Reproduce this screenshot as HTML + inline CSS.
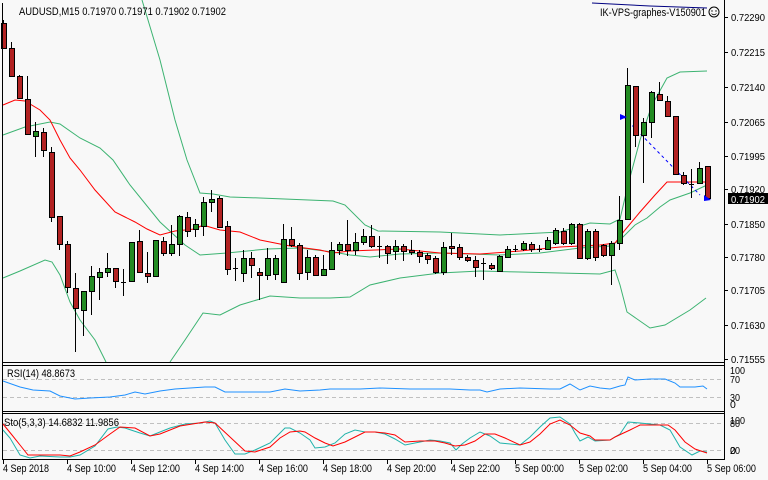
<!DOCTYPE html>
<html><head><meta charset="utf-8">
<style>
html,body{margin:0;padding:0;background:#f8f8f8;}
svg{display:block;font-family:"Liberation Sans",sans-serif;font-size:11px;}
</style></head>
<body>
<svg id="s" width="768" height="480" viewBox="0 0 768 480" xmlns="http://www.w3.org/2000/svg">
<rect width="768" height="480" fill="#f8f8f8"/>
<g id="bands" fill="none" stroke-width="1">
<polyline stroke="#3cb371" points="142,0 160,60 175,120 187,160 200,193 213,194 230,197 260,198 333,201 345,205 365,225 378,231 440,232 500,235 560,232 590,223 610,224 620,219 628,185 640,140 652,105 667,78 680,72 707,71"/>
<polyline stroke="#3cb371" points="3,135 25,127 50,122 60,124 80,138 100,148 113,160 130,185 160,222 185,245 200,255 227,253 267,249 300,248 333,252 350,255 370,257 400,254 440,253 470,254 500,255 540,253 580,248 610,246 620,240 635,225 647,218 660,207 670,200 690,193 707,185"/>
<polyline stroke="#3cb371" points="3,278 20,271 45,260 52,262 60,275 70,302 80,320 95,340 106,362"/>
<polyline stroke="#3cb371" points="170,362 185,340 203,313 220,315 240,305 250,302 270,296 300,298 330,298 350,297 370,285 400,278 440,273 480,271 520,272 560,273 600,274 615,270 620,285 627,312 650,328 665,325 690,310 706,298"/>
<polyline stroke="#ff0000" points="3,105 15,100 25,101 40,110 50,120 60,140 70,158 80,170 95,190 115,212 125,217 135,222 147,229 160,235 175,231 195,229 203,225 213,228 220,230 240,232 260,240 290,246 320,250 333,253 350,251 400,249 440,253 480,254 520,251 560,247 600,245 615,243 625,230 640,212 655,195 667,182 680,182 705,182"/>
<line x1="624" y1="117" x2="700" y2="195" stroke="#0000ff" stroke-dasharray="3,3"/>
<polyline stroke="#000080" points="592,3 650,6 707,8"/>
</g>
<g id="candles"></g>
<path d="M620,114 L627,117 L620,120 Z" fill="#0000ff"/>
<path d="M704,195 L711,200 L704,201 Z" fill="#0000ff"/>
<g fill="none" stroke="#000" stroke-width="1">
<line x1="2.5" y1="3" x2="2.5" y2="459"/>
<line x1="724.5" y1="0" x2="724.5" y2="460"/>
<line x1="2" y1="362.5" x2="725" y2="362.5"/>
<line x1="2" y1="365.5" x2="725" y2="365.5"/>
<line x1="2" y1="411.5" x2="725" y2="411.5"/>
<line x1="2" y1="413.5" x2="725" y2="413.5"/>
<line x1="2" y1="459.5" x2="725" y2="459.5"/>
</g>
<g stroke="#c0c0c0" stroke-dasharray="4,3">
<line x1="3" y1="379.5" x2="724" y2="379.5"/>
<line x1="3" y1="397.5" x2="724" y2="397.5"/>
<line x1="3" y1="423.5" x2="724" y2="423.5"/>
<line x1="3" y1="450.5" x2="724" y2="450.5"/>
</g>
<polyline fill="none" stroke="#1e90ff" points="3,381 20,387 33,390 50,391 60,396 75,399 90,398 110,397 125,395 135,392 145,394 160,391 175,389 190,388 205,387 215,387 225,392 245,392 270,392 285,389 300,391 320,390 330,389 360,389 380,388 410,389 450,389 470,390 480,390 487,392 500,389 520,388 550,389 560,389 570,384 580,390 590,386 600,388 610,389 620,386 625,385 628,377 635,380 650,379 665,379 675,383 680,387 695,387 703,386 707,389"/>
<polyline fill="none" stroke="#20b2aa" points="3,430 10,438 20,455 30,458 40,456 60,457 70,457 80,455 95,446 108,429 117,427 125,428 140,433 150,436 160,432 170,428 185,424 200,423 210,421 215,423 225,440 235,454 245,454 255,450 270,443 280,433 285,428 290,428 300,433 310,440 315,448 325,447 335,443 345,434 355,430 365,432 375,432 385,434 395,439 405,445 420,442 430,440 440,441 450,443 456,450 462,444 470,438 480,432 490,436 500,443 520,445 530,437 540,427 550,418 560,417 570,424 575,433 580,441 588,437 595,441 610,440 620,434 628,422 640,423 660,425 670,430 680,447 692,455 700,451 707,452"/>
<polyline fill="none" stroke="#ff0000" points="3,424 12,435 20,445 28,455 40,455 60,455 70,456 80,452 95,445 110,434 120,427 135,428 150,436 160,434 180,426 205,422 215,423 230,437 245,451 255,452 270,447 280,438 290,432 300,431 305,432 315,438 325,443 333,446 345,442 355,437 365,432 375,432 385,433 395,435 405,442 420,441 435,441 445,443 455,446 465,445 475,441 485,434 495,434 505,438 520,445 530,442 540,434 550,424 560,420 570,425 580,433 590,436 595,440 610,440 615,437 630,430 640,425 668,425 675,430 685,442 695,449 707,453"/>
<g fill="#000">
<text x="19" y="15" textLength="207" lengthAdjust="spacingAndGlyphs">AUDUSD,M15  0.71970 0.71971 0.71902 0.71902</text>
<text x="600" y="16" textLength="106" lengthAdjust="spacingAndGlyphs">IK-VPS-graphes-V150901</text>
<text x="7" y="377" textLength="68" lengthAdjust="spacingAndGlyphs">RSI(14) 48.8673</text>
<text x="4" y="426" textLength="115" lengthAdjust="spacingAndGlyphs">Sto(5,3,3) 14.6832 11.9856</text>
</g>
<circle cx="714" cy="12" r="5" fill="none" stroke="#000"/>
<circle cx="712" cy="11" r="0.7" fill="#000"/><circle cx="716" cy="11" r="0.7" fill="#000"/>
<path d="M711.5,13.5 Q714,16 716.5,13.5" fill="none" stroke="#000" stroke-width="0.8"/>
<g fill="#000" font-size="10.5">
<text x="731" y="21" textLength="34" lengthAdjust="spacingAndGlyphs">0.72290</text>
<text x="731" y="56" textLength="34" lengthAdjust="spacingAndGlyphs">0.72215</text>
<text x="731" y="91" textLength="34" lengthAdjust="spacingAndGlyphs">0.72140</text>
<text x="731" y="126" textLength="34" lengthAdjust="spacingAndGlyphs">0.72065</text>
<text x="731" y="160" textLength="34" lengthAdjust="spacingAndGlyphs">0.71995</text>
<text x="731" y="193" textLength="34" lengthAdjust="spacingAndGlyphs">0.71920</text>
<text x="731" y="228" textLength="34" lengthAdjust="spacingAndGlyphs">0.71850</text>
<text x="731" y="261" textLength="34" lengthAdjust="spacingAndGlyphs">0.71780</text>
<text x="731" y="294" textLength="34" lengthAdjust="spacingAndGlyphs">0.71705</text>
<text x="731" y="329" textLength="34" lengthAdjust="spacingAndGlyphs">0.71630</text>
<text x="731" y="363" textLength="34" lengthAdjust="spacingAndGlyphs">0.71555</text>
<text x="730" y="374" textLength="15" lengthAdjust="spacingAndGlyphs">100</text>
<text x="730" y="383" textLength="10" lengthAdjust="spacingAndGlyphs">70</text>
<text x="730" y="401" textLength="10" lengthAdjust="spacingAndGlyphs">30</text>
<text x="730" y="408">0</text>
<text x="730" y="424" textLength="15" lengthAdjust="spacingAndGlyphs">100</text>
<text x="730" y="427" textLength="10" lengthAdjust="spacingAndGlyphs">80</text>
<text x="730" y="454" textLength="10" lengthAdjust="spacingAndGlyphs">20</text>
<text x="730" y="454">0</text>
</g>
<g stroke="#000">
<line x1="724" y1="17.5" x2="728" y2="17.5"/><line x1="724" y1="52.5" x2="728" y2="52.5"/><line x1="724" y1="87.5" x2="728" y2="87.5"/><line x1="724" y1="122.5" x2="728" y2="122.5"/><line x1="724" y1="156.5" x2="728" y2="156.5"/><line x1="724" y1="189.5" x2="728" y2="189.5"/><line x1="724" y1="224.5" x2="728" y2="224.5"/><line x1="724" y1="257.5" x2="728" y2="257.5"/><line x1="724" y1="290.5" x2="728" y2="290.5"/><line x1="724" y1="325.5" x2="728" y2="325.5"/><line x1="724" y1="359.5" x2="728" y2="359.5"/>
</g>
<rect x="728" y="193" width="40" height="11" fill="#000"/>
<text x="731" y="203" fill="#fff" font-size="10.5" textLength="34" lengthAdjust="spacingAndGlyphs">0.71902</text>
<g stroke="#000">
<line x1="3.5" y1="459" x2="3.5" y2="464"/><line x1="67.5" y1="459" x2="67.5" y2="464"/><line x1="131.5" y1="459" x2="131.5" y2="464"/><line x1="195.5" y1="459" x2="195.5" y2="464"/><line x1="259.5" y1="459" x2="259.5" y2="464"/><line x1="323.5" y1="459" x2="323.5" y2="464"/><line x1="387.5" y1="459" x2="387.5" y2="464"/><line x1="451.5" y1="459" x2="451.5" y2="464"/><line x1="515.5" y1="459" x2="515.5" y2="464"/><line x1="579.5" y1="459" x2="579.5" y2="464"/><line x1="643.5" y1="459" x2="643.5" y2="464"/><line x1="707.5" y1="459" x2="707.5" y2="464"/>
</g>
<g fill="#000">
<text x="3" y="472" textLength="46" lengthAdjust="spacingAndGlyphs">4 Sep 2018</text>
<text x="67" y="472" textLength="49" lengthAdjust="spacingAndGlyphs">4 Sep 10:00</text>
<text x="131" y="472" textLength="49" lengthAdjust="spacingAndGlyphs">4 Sep 12:00</text>
<text x="195" y="472" textLength="49" lengthAdjust="spacingAndGlyphs">4 Sep 14:00</text>
<text x="259" y="472" textLength="49" lengthAdjust="spacingAndGlyphs">4 Sep 16:00</text>
<text x="323" y="472" textLength="49" lengthAdjust="spacingAndGlyphs">4 Sep 18:00</text>
<text x="387" y="472" textLength="49" lengthAdjust="spacingAndGlyphs">4 Sep 20:00</text>
<text x="451" y="472" textLength="49" lengthAdjust="spacingAndGlyphs">4 Sep 22:00</text>
<text x="515" y="472" textLength="49" lengthAdjust="spacingAndGlyphs">5 Sep 00:00</text>
<text x="579" y="472" textLength="49" lengthAdjust="spacingAndGlyphs">5 Sep 02:00</text>
<text x="643" y="472" textLength="49" lengthAdjust="spacingAndGlyphs">5 Sep 04:00</text>
<text x="707" y="472" textLength="49" lengthAdjust="spacingAndGlyphs">5 Sep 06:00</text>
</g>
</svg>
<script>
var d=[[3,23,48,20,48,'r'],[11,48,76,42,76,'r'],[19,76,98,75,98,'r'],[27,99,134,76,134,'r'],[35,131,136,122,157,'g'],[43,132,150,128,157,'r'],[51,152,217,147,222,'r'],[59,216,244,216,250,'r'],[67,244,287,241,293,'r'],[75,288,308,273,352,'r'],[83,291,310,291,336,'g'],[91,276,291,266,315,'g'],[99,272,277,268,300,'g'],[107,268,272,253,277,'g'],[115,268,281,268,288,'r'],[123,282,282,269,296,'d'],[131,242,281,242,281,'g'],[139,241,272,230,272,'r'],[147,273,276,252,283,'r'],[155,240,276,240,277,'g'],[163,241,253,237,256,'r'],[171,244,253,225,256,'g'],[179,216,244,215,256,'g'],[187,217,231,212,237,'r'],[195,224,229,219,237,'g'],[203,202,226,197,236,'g'],[211,199,202,190,212,'g'],[219,198,227,196,228,'r'],[227,226,269,221,275,'r'],[235,268,268,258,281,'d'],[243,258,273,250,282,'g'],[251,258,265,252,278,'r'],[259,272,275,268,300,'r'],[267,258,275,248,280,'g'],[275,258,274,255,280,'g'],[283,239,282,224,283,'g'],[291,239,245,227,247,'r'],[299,245,273,243,280,'r'],[307,257,272,250,280,'g'],[315,257,275,255,276,'r'],[323,269,275,255,276,'g'],[331,250,269,242,269,'g'],[339,244,250,242,255,'g'],[347,244,250,220,256,'r'],[355,242,250,233,255,'g'],[363,236,242,229,245,'g'],[371,236,246,225,248,'r'],[379,246,246,236,258,'d'],[387,246,253,245,264,'r'],[395,246,251,240,260,'g'],[403,246,251,244,261,'r'],[411,250,252,240,255,'r'],[419,252,256,250,263,'r'],[427,255,259,253,264,'r'],[435,258,272,256,274,'r'],[443,247,272,242,275,'g'],[451,246,248,233,255,'r'],[459,247,257,244,260,'r'],[467,257,260,255,262,'r'],[475,260,267,256,277,'r'],[483,263,263,258,280,'d'],[491,265,268,263,270,'r'],[499,256,271,255,272,'g'],[507,249,257,246,258,'g'],[515,249,249,245,252,'d'],[523,243,249,241,251,'g'],[531,244,249,242,252,'r'],[539,249,249,245,252,'d'],[547,240,249,237,250,'g'],[555,230,243,228,245,'g'],[563,231,243,228,245,'r'],[571,224,243,223,245,'g'],[579,224,258,223,258,'r'],[587,231,258,229,260,'g'],[595,231,257,229,261,'r'],[603,245,255,244,257,'r'],[611,243,255,241,285,'g'],[619,220,243,196,250,'g'],[627,85,219,68,220,'g'],[635,86,135,86,147,'r'],[643,122,135,118,183,'g'],[651,92,122,91,138,'g'],[659,94,100,82,101,'r'],[667,101,116,96,117,'r'],[675,116,174,116,175,'r'],[683,175,183,172,185,'r'],[691,184,184,169,198,'d'],[699,168,183,162,184,'g'],[707,166,198,166,198,'r']];
var h='';
d.forEach(function(c){
 var x=c[0];
 h+='<line x1="'+(x+0.5)+'" y1="'+c[3]+'" x2="'+(x+0.5)+'" y2="'+c[4]+'" stroke="#000"/>';
 if(c[5]=='d'){h+='<line x1="'+(x-2)+'" y1="'+(c[1]+0.5)+'" x2="'+(x+3)+'" y2="'+(c[1]+0.5)+'" stroke="#000"/>';}
 else{var f=c[5]=='g'?'#228b22':'#b22222';
 h+='<rect x="'+(x-1.5)+'" y="'+(c[1]+0.5)+'" width="5" height="'+Math.max(1,c[2]-c[1])+'" fill="'+f+'" stroke="#000"/>';}
});
document.getElementById('candles').innerHTML=h;
</script>
</body></html>
